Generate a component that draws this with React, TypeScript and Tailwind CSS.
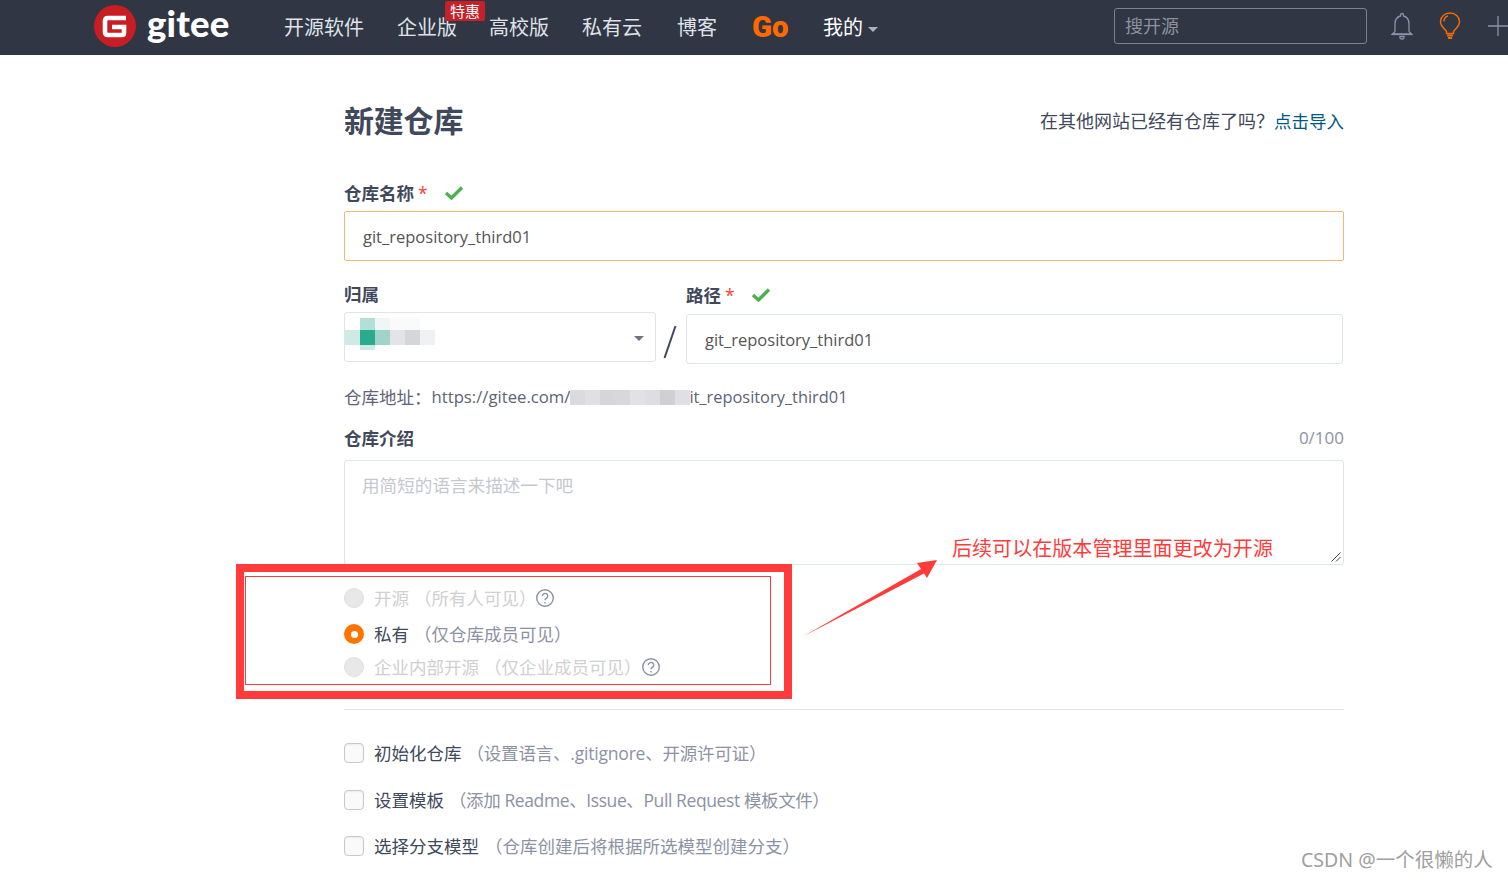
import React from "react";

const FONT = "font-['Open_Sans','Noto_Sans_CJK_SC',sans-serif]";

function Logo() {
  return (
    <svg width="42" height="42" viewBox="0 0 42 42" className="shrink-0">
      <circle cx="21" cy="21" r="21" fill="#c71d23" />
      <path d="M32 13H14Q11 13 11 16V27Q11 30 14 30H28Q30 30 30 28V22H18" fill="none" stroke="#fff" strokeWidth="4.6" />
    </svg>
  );
}

function Bell() {
  return (
    <svg width="24" height="28" viewBox="0 0 24 28" fill="none" stroke="#8a93a8" strokeWidth="1.3">
      <path d="M12 1.5a1.5 1.5 0 0 1 1.5 1.5v1C17.500 5 19 8.500 19 12v7c0 1 .8 1.500 2.500 3h-19C4.200 20.500 5 20 5 19v-7c0-3.500 1.500-7 5.500-8V3A1.500 1.500 0 0 1 12 1.500z" />
      <path d="M1.500 22.500h21" />
      <path d="M10 24.500h4v1.500a2 1 0 0 1-4 0z" />
    </svg>
  );
}

function Bulb() {
  return (
    <svg width="24" height="28" viewBox="0 0 24 28" fill="none" stroke="#f56a00" strokeWidth="1.5">
      <path d="M8.500 21.500v-2C7.500 17 2.500 15 2.500 9.500A9.500 8.500 0 0 1 21.500 9.500c0 5.500-5 7.500-6 10v2z" />
      <path d="M6 9.500C6 6.500 8 4.500 10 4" />
      <path d="M9 23.500h6M10 26h4" strokeWidth="1.800" />
    </svg>
  );
}

function Check() {
  return (
    <svg width="20" height="16" viewBox="0 0 20 16" fill="none" stroke="#4caf50" strokeWidth="3.400">
      <path d="M2 8l5.500 5L18 2.500" />
    </svg>
  );
}

function Help() {
  return (
    <svg width="20" height="20" viewBox="0 0 20 20" fill="none" stroke="#8c92a4" strokeWidth="1.400">
      <circle cx="10" cy="10" r="8.300" />
      <path d="M7.300 8a2.700 2.600 0 1 1 4.300 2.100c-1 .7-1.600 1.100-1.600 2.200" />
      <path d="M10 14v1.400" />
    </svg>
  );
}

function Radio({ on, children, className }: { on?: boolean; children: React.ReactNode; className: string }) {
  return (
    <div className={"flex items-center h-6 " + className}>
      {on ? (
        <span className="w-5 h-5 rounded-full bg-[#ff7500] flex items-center justify-center">
          <span className="w-[7px] h-[7px] rounded-full bg-white" />
        </span>
      ) : (
        <span className="w-5 h-5 rounded-full bg-[#e8e8e8] border border-[#dedede]" />
      )}
      <div className="ml-[10px] flex items-center text-[17.5px]">{children}</div>
    </div>
  );
}

function Check2({ label, hint, className, hintClass }: { label: string; hint: string; className: string; hintClass: string }) {
  return (
    <div className={"flex items-center h-6 " + className}>
      <span className="w-5 h-5 rounded-[4px] border border-[#c8c8cc] bg-[#fafafa] shadow-[inset_0_1px_2px_rgba(0,0,0,0.06)]" />
      <span className="ml-[10px] text-[17.5px] text-[#40485b]">{label}</span>
      <span className={"text-[17.5px] text-[#8c92a4] " + hintClass}>（{hint}）</span>
    </div>
  );
}

const selectCells = [
  ["", "#b2dfd6", "#eef7f6", "#fafafa", "#fafafa", ""],
  ["#cdeae4", "#2bab8e", "#a0d3ca", "#e3e4e7", "#d5d6da", "#f0f1f3"],
  ["", "#cdeae4", "", "", "", ""],
];
const urlCells = ["#dadadf", "#e0e0e4", "#d5d5da", "#d8d8dc", "#e2e2e6", "#dedee2", "#cfcfd4", "#e0e0e4"];

export default function App() {
  return (
    <div className={"relative w-[1508px] h-[880px] overflow-hidden bg-white " + FONT}>
      <header className="h-[55px] bg-[#303643] flex items-center whitespace-nowrap">
        <div className="ml-[94px] flex items-center -mt-[3px]">
          <Logo />
          <span className="ml-[11px] w-[82px] text-[36.500px] leading-none font-black text-white -mt-[5px] font-['Lato',sans-serif] tracking-[0.2px]">gitee</span>
        </div>
        <nav className="ml-[55px] flex items-center text-[20px] text-[#dfe2e8]">
          <span className="w-[81px]">开源软件</span>
          <span className="relative ml-[32px] w-[61px]">
            企业版
            <span className="absolute left-[48px] -top-[12px] w-10 h-[20px] rounded-[2px] bg-[#c7202a] text-white text-[15px] leading-[20px] text-center">特惠</span>
          </span>
          <span className="ml-[31px] w-[61px]">高校版</span>
          <span className="ml-[32px] w-[61px]">私有云</span>
          <span className="ml-[34px] w-[41px]">博客</span>
          <span className="ml-[34px] w-[37px] text-[29.5px] leading-none font-black text-[#ff6a00] font-['Roboto',sans-serif]">Go</span>
          <span className="ml-[34px] text-white">我的</span>
          <span className="ml-[5px] mt-[3px] w-0 h-0 border-x-[5px] border-x-transparent border-t-[5px] border-t-[#aab0bc]" />
        </nav>
        <div className="ml-[236px] -mt-[3px] w-[253px] h-9 rounded-[3px] border border-[#7c8291] flex items-center pl-[10px] text-lg text-[#8e929c]">搜开源</div>
        <span className="ml-[23px] -mt-[3px] flex"><Bell /></span>
        <span className="ml-[24px] -mt-[3px] flex"><Bulb /></span>
        <svg width="20" height="24" viewBox="0 0 20 24" className="ml-[26px] -mt-[3px] shrink-0" stroke="#8a93a8" strokeWidth="1.300">
          <path d="M10 2v20M0 12h20" />
        </svg>
      </header>

      <main className="ml-[344px] w-[1000px]">
        <div className="h-[52px] mt-[40px] flex items-center justify-between">
          <h1 className="text-[30px] leading-[50px] font-bold text-[#40485b] tracking-[-0.2px]">新建仓库</h1>
          <div className="flex items-center text-[#40485b]">
            <span className="text-lg leading-[50px]">在其他网站已经有仓库了吗？</span>
            <span className="text-[17.500px] leading-[50px] text-[#005980]">点击导入</span>
          </div>
        </div>

        <div className="mt-[33px] h-[26px] flex items-center text-[17.500px] font-bold text-[#40485b]">
          仓库名称<span className="ml-[4px] text-[#f44336] font-normal">*</span>
          <span className="ml-[16px] flex"><Check /></span>
        </div>
        <div className="mt-[5px] h-[50px] border border-[#f5b87a] rounded-[2px] flex items-center pl-[18px] pt-[2px] text-[16.500px] text-[#555]">git_repository_third01</div>

        <div className="mt-[21px] flex items-start">
          <div className="w-[312px]">
            <div className="h-6 flex items-center text-[17.500px] font-bold text-[#40485b]">归属</div>
            <div className="relative mt-[6px] h-[50px] border border-[#dfe3ea] rounded-[3px] flex items-center">
              <div className="absolute left-0 top-[5px]">
                {selectCells.map((row, r) => (
                  <div key={r} className={r === 0 ? "flex h-3" : r === 1 ? "flex h-[15px]" : "flex h-[5px]"}>
                    {row.map((c, i) => (
                      <span key={i} className="w-[15px]" style={{ background: c || "transparent" }} />
                    ))}
                  </div>
                ))}
              </div>
              <span className="absolute right-[11px] top-[23px] w-0 h-0 border-x-[5px] border-x-transparent border-t-[5px] border-t-[#6e7482]" />
            </div>
          </div>
          <div className="w-[30px] mt-[42px] h-[36px] flex items-center justify-center">
            <svg width="16" height="34" viewBox="0 0 16 34" stroke="#40485b" strokeWidth="2" className="-ml-[2px]"><path d="M13.500 1L2.500 33" /></svg>
          </div>
          <div className="flex-1">
            <div className="h-[26px] flex items-center text-[17.500px] font-bold text-[#40485b]">
              路径<span className="ml-[4px] text-[#f44336] font-normal">*</span>
              <span className="ml-[16px] flex"><Check /></span>
            </div>
            <div className="mt-[6px] mr-px h-[50px] border border-[#dfe3ea] rounded-[3px] flex items-center pl-[18px] pt-[3px] text-[16.500px] text-[#555]">git_repository_third01</div>
          </div>
        </div>

        <div className="mt-[18px] h-[30px] flex items-center text-[17.500px] text-[#5d6475]">
          <span>仓库地址：</span>
          <span className="text-[16.700px]">https://gitee.com/</span>
          <span className="flex h-[15px]">
            {urlCells.map((c, i) => (
              <span key={i} className="w-[15px]" style={{ background: c }} />
            ))}
          </span>
          <span className="text-[16.400px] -ml-px">it_repository_third01</span>
        </div>

        <div className="mt-[13px] h-[26px] flex items-center justify-between">
          <span className="text-[17.500px] font-bold text-[#40485b]">仓库介绍</span>
          <span className="text-[17px] text-[#8c92a4]">0/100</span>
        </div>
        <div className="relative mt-[9px] h-[105px] border border-[#dfe3ea] rounded-[3px] pl-[17px] pt-[11px] text-[17.600px] text-[#c5c8d0]">
          用简短的语言来描述一下吧
          <svg width="10" height="10" viewBox="0 0 10 10" className="absolute right-[2px] bottom-[2px]" stroke="#444" strokeWidth="1">
            <path d="M0.500 9.500L9.500 0.500M5 9.500L9.500 5" />
          </svg>
        </div>

        <Radio className="mt-[21px] text-[#d0d0d0]">
          <span>开源</span>
          <span className="ml-[5px]">（所有人可见）</span>
          <span className="-ml-[2px] flex"><Help /></span>
        </Radio>
        <Radio on className="mt-[12px]">
          <span className="text-[#40485b]">私有</span>
          <span className="ml-[5px] text-[#8c92a4]">（仅仓库成员可见）</span>
        </Radio>
        <Radio className="mt-[9px] text-[#d0d0d0]">
          <span>企业内部开源</span>
          <span className="ml-[5px]">（仅企业成员可见）</span>
          <span className="-ml-[1px] flex"><Help /></span>
        </Radio>

        <div className="mt-[30px] h-px bg-[#e3e5ea]" />

        <Check2 className="mt-[31px]" hintClass="ml-[5px] tracking-[-0.2px]" label="初始化仓库" hint="设置语言、.gitignore、开源许可证" />
        <Check2 className="mt-[23px]" hintClass="ml-[5px] tracking-[-0.4px]" label="设置模板" hint="添加 Readme、Issue、Pull Request 模板文件" />
        <Check2 className="mt-[22px]" hintClass="ml-[6px]" label="选择分支模型" hint="仓库创建后将根据所选模型创建分支" />
      </main>

      <div className="absolute left-[236px] top-[564px] w-[556px] h-[135px] border-[8px] border-[#ff3b3b]" />
      <div className="absolute left-[245px] top-[576px] w-[526px] h-[109px] border border-[#ff3b3b]" />
      <svg className="absolute left-[800px] top-[556px]" width="140" height="84" viewBox="0 0 140 84">
        <path d="M3 80.500L121 13L117 7L137 4L127 22L124 17.500Z" fill="#ff3b3b" />
      </svg>
      <div className="absolute left-[952px] top-[535px] text-[20px] leading-7 text-[#ff3b3b] tracking-[0.06px]">后续可以在版本管理里面更改为开源</div>
      <div className="absolute left-[1301px] top-[848px] text-[19.500px] leading-6 text-[#a0a0a0] whitespace-nowrap font-['Noto_Sans','Noto_Sans_CJK_SC',sans-serif]">CSDN @一个很懒的人</div>
    </div>
  );
}
